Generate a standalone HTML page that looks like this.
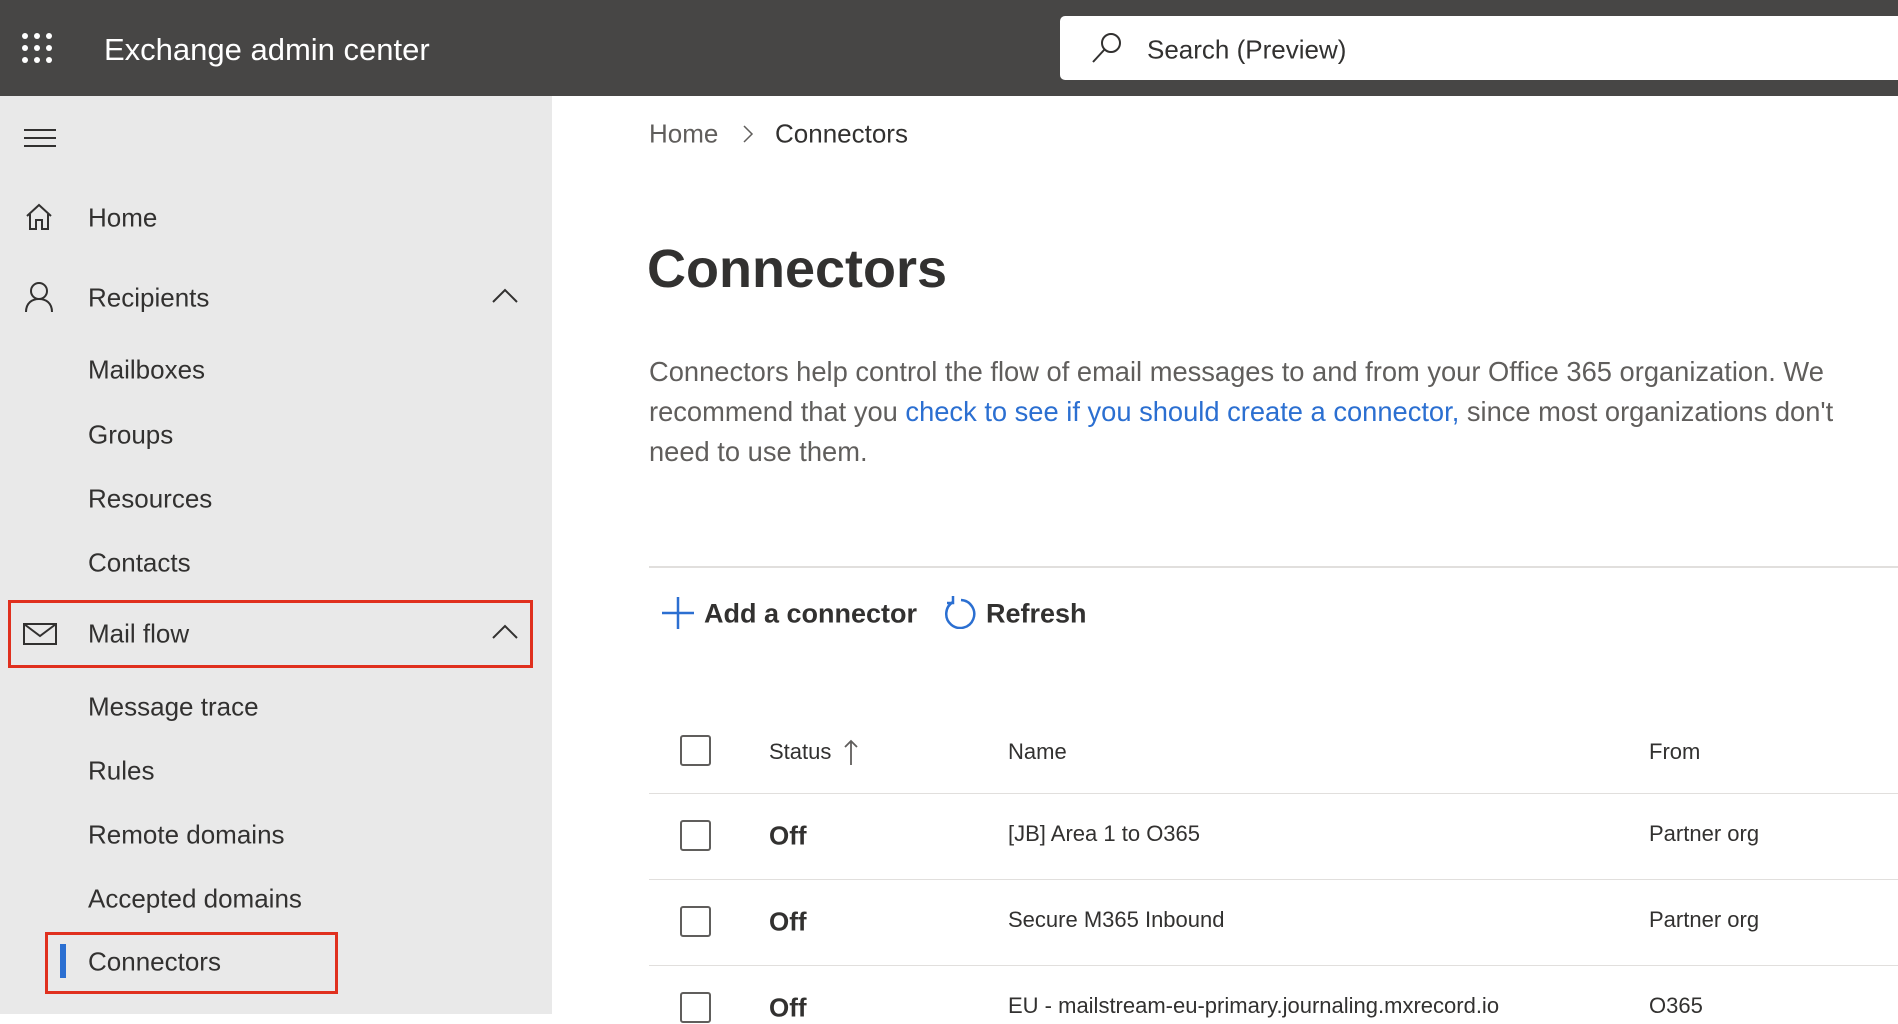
<!DOCTYPE html>
<html><head><meta charset="utf-8"><style>
*{margin:0;padding:0;box-sizing:border-box}
body{width:1898px;height:1014px;overflow:hidden;font-family:"Liberation Sans",sans-serif;color:#323130;background:#fff;position:relative}
.a{position:absolute;white-space:nowrap}
#hdr{position:absolute;left:0;top:0;width:1898px;height:96px;background:#474645}
#side{position:absolute;left:0;top:96px;width:552px;height:918px;background:#e9e9e9}
.nav{font-size:26px;color:#323130;left:88px;transform:translateY(-50%)}
.th{font-size:22px;color:#323130;transform:translateY(-50%)}
.td{font-size:22px;color:#323130;transform:translateY(-50%)}
.cb{position:absolute;left:680px;width:31px;height:31px;border:2px solid #605e5c;border-radius:3px}
.line{position:absolute;left:649px;right:0;height:1px;background:#e1dfdd}
</style></head><body>
<div id="hdr"></div>
<svg class="a" style="left:21px;top:32px" width="32" height="32" viewBox="0 0 32 32" fill="#fff">
<circle cx="4" cy="4" r="3"/><circle cx="16" cy="4" r="3"/><circle cx="28" cy="4" r="3"/>
<circle cx="4" cy="16" r="3"/><circle cx="16" cy="16" r="3"/><circle cx="28" cy="16" r="3"/>
<circle cx="4" cy="28" r="3"/><circle cx="16" cy="28" r="3"/><circle cx="28" cy="28" r="3"/></svg>
<div class="a" style="left:104px;top:50px;transform:translateY(-50%);font-size:31px;color:#fff">Exchange admin center</div>
<div class="a" style="left:1060px;top:16px;width:850px;height:64px;background:#fff;border-radius:5px"></div>
<svg class="a" style="left:1090px;top:31px" width="34" height="34" viewBox="0 0 34 34" fill="none" stroke="#323130" stroke-width="2"><circle cx="21" cy="12" r="9"/><path d="M14.5 18.5L3 31"/></svg>
<div class="a" style="left:1147px;top:50px;transform:translateY(-50%);font-size:26px;color:#323130">Search (Preview)</div>

<div id="side"></div>
<svg class="a" style="left:24px;top:128px" width="32" height="20" viewBox="0 0 32 20" stroke="#323130" stroke-width="2"><path d="M0 2H32M0 10H32M0 18H32"/></svg>
<svg class="a" style="left:25px;top:203px" width="28" height="28" viewBox="0 0 28 28" fill="none" stroke="#323130" stroke-width="2"><path d="M2 13L14 2L26 13M5 11V26H11V17H17V26H23V11"/></svg>
<div class="a nav" style="top:218px">Home</div>
<svg class="a" style="left:24px;top:281px" width="30" height="32" viewBox="0 0 30 32" fill="none" stroke="#323130" stroke-width="2"><circle cx="15" cy="10" r="8"/><path d="M2 31C2 22 8 18 15 18S28 22 28 31"/></svg>
<div class="a nav" style="top:298px">Recipients</div>
<svg class="a" style="left:492px;top:288px" width="26" height="16" viewBox="0 0 26 16" fill="none" stroke="#323130" stroke-width="2"><path d="M1 14L13 2L25 14"/></svg>
<div class="a nav" style="top:370px">Mailboxes</div>
<div class="a nav" style="top:435px">Groups</div>
<div class="a nav" style="top:499px">Resources</div>
<div class="a nav" style="top:563px">Contacts</div>
<div class="a" style="left:8px;top:600px;width:525px;height:68px;border:3px solid #e0301e"></div>
<svg class="a" style="left:23px;top:623px" width="34" height="22" viewBox="0 0 34 22" fill="none" stroke="#323130" stroke-width="2"><rect x="1" y="1" width="32" height="20"/><path d="M1 1L17 13L33 1"/></svg>
<div class="a nav" style="top:634px">Mail flow</div>
<svg class="a" style="left:492px;top:624px" width="26" height="16" viewBox="0 0 26 16" fill="none" stroke="#323130" stroke-width="2"><path d="M1 14L13 2L25 14"/></svg>
<div class="a nav" style="top:707px">Message trace</div>
<div class="a nav" style="top:771px">Rules</div>
<div class="a nav" style="top:835px">Remote domains</div>
<div class="a nav" style="top:899px">Accepted domains</div>
<div class="a" style="left:45px;top:932px;width:293px;height:62px;border:3px solid #e0301e"></div>
<div class="a" style="left:60px;top:944px;width:6px;height:34px;background:#2b6fd1"></div>
<div class="a nav" style="top:962px">Connectors</div>

<div class="a" style="left:649px;top:134px;transform:translateY(-50%);font-size:26px;color:#605e5c">Home</div>
<svg class="a" style="left:742px;top:125px" width="12" height="18" viewBox="0 0 12 18" fill="none" stroke="#605e5c" stroke-width="1.5"><path d="M2 1L10 9L2 17"/></svg>
<div class="a" style="left:775px;top:134px;transform:translateY(-50%);font-size:26px;color:#323130">Connectors</div>
<div class="a" style="left:647px;top:269px;transform:translateY(-50%);font-size:54px;font-weight:bold;color:#323130">Connectors</div>
<div class="a" style="left:649px;top:352px;width:1236px;font-size:27.3px;line-height:40px;color:#605e5c;white-space:normal">Connectors help control the flow of email messages to and from your Office 365 organization. We recommend that you <span style="color:#2b6fd1">check to see if you should create a connector,</span> since most organizations don't need to use them.</div>
<div class="a" style="left:649px;top:566px;width:1249px;height:2px;background:#e1dfdd"></div>
<svg class="a" style="left:662px;top:597px" width="32" height="32" viewBox="0 0 32 32" stroke="#2b6fd1" stroke-width="2.5"><path d="M16 0V32M0 16H32"/></svg>
<div class="a" style="left:704px;top:614px;transform:translateY(-50%);font-size:27px;font-weight:bold;color:#323130">Add a connector</div>
<svg class="a" style="left:944px;top:595px" width="32" height="34" viewBox="0 0 32 34" fill="none" stroke="#2b6fd1" stroke-width="2.5"><path d="M9 7A14 14 0 1 0 17 5"/><path d="M9 1V8H3"/></svg>
<div class="a" style="left:986px;top:614px;transform:translateY(-50%);font-size:27px;font-weight:bold;color:#323130">Refresh</div>

<div class="cb" style="top:735px"></div>
<div class="a th" style="left:769px;top:752px">Status</div>
<svg class="a" style="left:844px;top:739px" width="14" height="26" viewBox="0 0 14 26" fill="none" stroke="#605e5c" stroke-width="1.8"><path d="M7 2V26M1 8L7 2L13 8"/></svg>
<div class="a th" style="left:1008px;top:752px">Name</div>
<div class="a th" style="left:1649px;top:752px">From</div>
<div class="line" style="top:793px"></div>
<div class="cb" style="top:820px"></div>
<div class="a td" style="left:769px;top:836px;font-size:26px;font-weight:bold">Off</div>
<div class="a td" style="left:1008px;top:834px">[JB] Area 1 to O365</div>
<div class="a td" style="left:1649px;top:834px">Partner org</div>
<div class="line" style="top:879px"></div>
<div class="cb" style="top:906px"></div>
<div class="a td" style="left:769px;top:922px;font-size:26px;font-weight:bold">Off</div>
<div class="a td" style="left:1008px;top:920px">Secure M365 Inbound</div>
<div class="a td" style="left:1649px;top:920px">Partner org</div>
<div class="line" style="top:965px"></div>
<div class="cb" style="top:992px"></div>
<div class="a td" style="left:769px;top:1008px;font-size:26px;font-weight:bold">Off</div>
<div class="a td" style="left:1008px;top:1006px">EU - mailstream-eu-primary.journaling.mxrecord.io</div>
<div class="a td" style="left:1649px;top:1006px">O365</div>
</body></html>
